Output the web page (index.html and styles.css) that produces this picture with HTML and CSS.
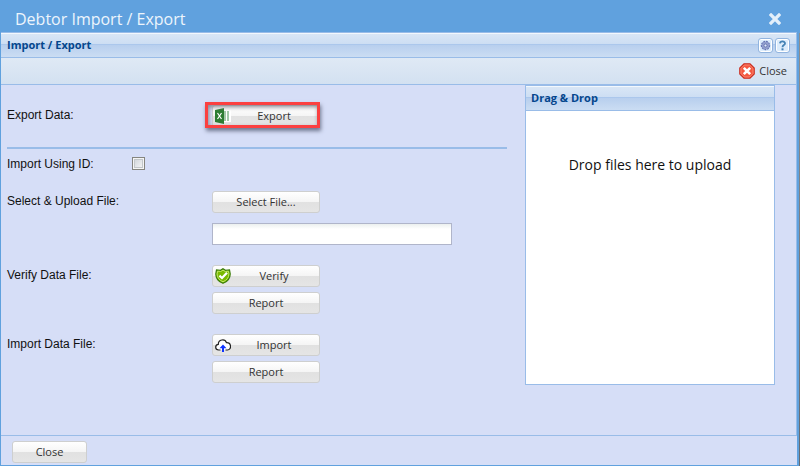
FILE: index.html
```html
<!DOCTYPE html>
<html lang="en">
<head>
<meta charset="utf-8">
<title>Debtor Import / Export</title>
<link rel="stylesheet" href="styles.css">
</head>
<body>
<div class="window">
  <header class="titlebar">
    <h1>Debtor Import / Export</h1>
    <button class="window-close" type="button" aria-label="Close window">
      <svg width="12" height="12" viewBox="0 0 12 12"><path d="M2 2l8 8M10 2l-8 8" stroke="#e3effa" stroke-width="3.2" stroke-linecap="square"/></svg>
    </button>
  </header>
  <main class="panel">
    <div class="panel-header">
      <h2>Import / Export</h2>
      <div class="tools">
        <button class="tool" type="button" aria-label="Settings">
          <svg width="11" height="11" viewBox="0 0 11 11"><circle cx="5.5" cy="5.5" r="4" fill="#8f9dd0" stroke="#6675b3" stroke-width="1.4" stroke-dasharray="1.8 0.9"/><circle cx="5.5" cy="5.5" r="3.5" fill="#929fce"/><circle cx="5.5" cy="5.5" r="1.5" fill="#e2ebfa" stroke="#5b6ba8" stroke-width=".8"/></svg>
        </button>
        <button class="tool" type="button" aria-label="Help">
          <svg width="9" height="11" viewBox="0 0 9 11"><path d="M2 3.4C2.2.8 7 .8 7 3.4 7 5.2 4.5 5 4.5 7.2" fill="none" stroke="#4583b5" stroke-width="1.8"/><path d="M3.5 8.3h2v2h-2z" fill="#4583b5"/></svg>
        </button>
      </div>
    </div>
    <div class="toolbar">
      <button class="toolbar-button" type="button">
        <svg width="16" height="16" viewBox="0 0 16 16"><path d="M5 .8h6L15.2 5v6L11 15.2H5L.8 11V5z" fill="#f4573f" stroke="#c92d20" stroke-width="1.2"/><path d="M5.4 2h5.2L14 5.4v5.2L10.6 14H5.4L2 10.6V5.4z" fill="none" stroke="#ff907a" stroke-width=".8"/><path d="M4.8 4.800l6.400 6.400M11.200 4.800l-6.400 6.400" stroke="#fff" stroke-width="2.600"/></svg>
        Close
      </button>
    </div>
    <div class="content">
      <form class="form">
        <section class="row export-row">
          <span class="label">Export Data:</span>
          <div class="highlight">
            <button class="button with-icon" type="button">
              <svg class="icon" width="16" height="16" viewBox="0 0 16 16"><path d="M8 2h8v12H8z" fill="#fff"/><path d="M9 3h2v10H9zM12 3h2v10h-2z" fill="#a2c9a8"/><path d="M0 2l9-2v16l-9-2z" fill="#2d7d32"/><path d="M2.500 5l4 6M6.500 5l-4 6" stroke="#fff" stroke-width="1.200"/></svg>
              <span>Export</span>
            </button>
          </div>
        </section>
        <section class="row check-row">
          <label class="label" for="use-id">Import Using ID:</label>
          <input class="checkbox" id="use-id" type="checkbox">
        </section>
        <section class="row">
          <label class="label" for="file-name">Select &amp; Upload File:</label>
          <div class="stack file-stack">
            <button class="button" type="button">Select File...</button>
            <input class="text-input" id="file-name" type="text">
          </div>
        </section>
        <section class="row">
          <span class="label">Verify Data File:</span>
          <div class="stack">
            <button class="button with-icon" type="button">
              <svg class="icon" width="16" height="16" viewBox="0 0 16 16"><path d="M8 .7l2.500 1.600 4-.4.700 4c0 4.500-2.700 7.600-7.200 9.400C3.500 13.500.8 10.400.8 5.900l.7-4 4 .4z" fill="#78b900" stroke="#3c7d0b" stroke-width="1.200"/><path d="M8 2.200l2.300 1.300 3.100-.3.500 2.700c0 3.700-2.100 6.300-5.900 7.900C4.200 12.200 2.100 9.600 2.100 5.900l.5-2.700 3.100.3z" fill="none" stroke="#c1e765"/><path d="M4.400 7.600L7 10l5-5.300" fill="none" stroke="#fff" stroke-width="2.300"/></svg>
              <span>Verify</span>
            </button>
            <button class="button" type="button">Report</button>
          </div>
        </section>
        <section class="row">
          <span class="label">Import Data File:</span>
          <div class="stack">
            <button class="button with-icon" type="button">
              <svg class="icon" width="16" height="16" viewBox="0 0 16 16"><path d="M5.500 13H3.700C-.3 12.900-.2 7.700 3.300 7.400 3.200 2.400 10 1.300 11.400 5.600 16.600 5.300 16.800 12.900 12.500 13h-2" fill="#fff" stroke="#222" stroke-width="1.200"/><path d="M8 7.500l3.500 3.700H9V15H7v-3.800H4.500z" fill="#0f34ff"/></svg>
              <span>Import</span>
            </button>
            <button class="button" type="button">Report</button>
          </div>
        </section>
      </form>
      <aside class="drop-panel">
        <div class="panel-header"><h2>Drag &amp; Drop</h2></div>
        <div class="drop-area">Drop files here to upload</div>
      </aside>
    </div>
  </main>
  <footer class="footer">
    <button class="button small" type="button">Close</button>
  </footer>
</div>
</body>
</html>
```
FILE: styles.css
```css
* { box-sizing: border-box; }

body {
  margin: 0;
  background: #d6def7;
  color: #111;
  font: 12px/16px "Liberation Sans", Arial, sans-serif;
}

button {
  margin: 0;
  padding: 0;
  border: 0;
  background: none;
  color: #333;
  font: 11px/16px "Open Sans", sans-serif;
}

h1, h2 { margin: 0; }
svg { display: block; }

.window {
  display: flex;
  flex-direction: column;
  min-height: 100vh;
  padding: 0 3px 1px 1px;
  background: linear-gradient(#8d8f91, #626870) right 33px / 1px no-repeat #60a1de;
}

.titlebar {
  display: flex;
  align-items: center;
  justify-content: space-between;
  height: 32px;
  padding: 6px 16px 0 14px;
}

.titlebar h1 {
  color: #edf5fc;
  font: 16px/24px "Open Sans", sans-serif;
}

.panel {
  display: flex;
  flex: 1;
  flex-direction: column;
  border: 1px solid #99bce8;
  border-left-width: 0;
  background: #d6def7;
}

.panel-header {
  display: flex;
  align-items: center;
  justify-content: space-between;
  height: 25px;
  padding: 0 6px;
  border-bottom: 1px solid #99bce8;
  box-shadow: inset 0 1px #f3f8fd;
  background: linear-gradient(#dae7f6, #cddef3 45%, #abc7ec 46%, #abc7ec 50%, #b8cfee 51%, #cbddf3);
}

.panel-header h2 {
  color: #04468c;
  font: bold 11px/16px "Open Sans", sans-serif;
}

.tools { display: flex; gap: 2px; }

.tool {
  display: grid;
  place-items: center;
  width: 15px;
  height: 15px;
  border: 1px solid #91b4df;
  border-radius: 3px;
  box-shadow: inset 0 0 0 1px #fff;
  background: #dcecfc;
}

.toolbar {
  display: flex;
  justify-content: flex-end;
  height: 27px;
  padding: 0 9px;
  border-bottom: 1px solid #99bce8;
  background: linear-gradient(#dfe9f5, #d3e1f1);
}

.toolbar-button {
  display: flex;
  align-items: center;
  gap: 4px;
}

.content {
  display: grid;
  grid-template-columns: 2fr 1fr;
  gap: 18px;
  align-items: start;
  padding: 0 21px 0 6px;
}

.form {
  display: flex;
  flex-direction: column;
  gap: 20px;
  padding-top: 20px;
}

.row {
  display: grid;
  grid-template-columns: 205px 1fr;
  align-items: start;
  justify-items: start;
}

.label { padding-top: 2px; }

.export-row {
  padding-bottom: 20px;
  border-bottom: 2px solid #99bce8;
}

.check-row {
  grid-template-columns: 125px 1fr;
  margin: -15px 0 -1px;
}

.checkbox {
  appearance: none;
  width: 13px;
  height: 13px;
  margin: 3px 0 0;
  border: 1px solid #85857f;
  box-shadow: inset 0 0 0 1px #f5f5f5, inset 0 0 0 2px #c3c7ca;
  background: linear-gradient(135deg, #cbd0d5, #fafafa);
}

.stack {
  display: flex;
  flex-direction: column;
  align-items: flex-start;
  gap: 5px;
}

.file-stack { gap: 10px; }

.button {
  position: relative;
  width: 108px;
  height: 22px;
  border: 1px solid #cecfcf;
  border-radius: 3px;
  background: linear-gradient(#fff, #f5f5f5 48%, #e1e1e1 50%, #e5e5e5);
}

.with-icon {
  display: flex;
  align-items: center;
  padding: 0 2px;
}

.with-icon span { flex: 1; }

.small { width: 75px; }

.text-input {
  width: 240px;
  height: 22px;
  padding: 1px 3px;
  border: 1px solid #b0b5ca;
  background: linear-gradient(#ecf0ef, #fff 5px);
}

.highlight { position: relative; }

.highlight::after {
  content: "";
  position: absolute;
  inset: -3px 0 -1px -7px;
  border: 3px solid #fb4040;
  box-shadow: 1px 3px 4px #70778f, inset 1px 2px 4px #85858f;
  pointer-events: none;
}

.drop-panel {
  border: 1px solid #99bce8;
  background: #fff;
}

.drop-panel .panel-header { padding: 0 5px; }

.drop-area {
  min-height: 273px;
  padding-top: 44px;
  font: 14px/20px "Open Sans", sans-serif;
  text-align: center;
}

.footer {
  height: 29px;
  padding: 5px 11px 0;
  background: #d6def7;
}
```
